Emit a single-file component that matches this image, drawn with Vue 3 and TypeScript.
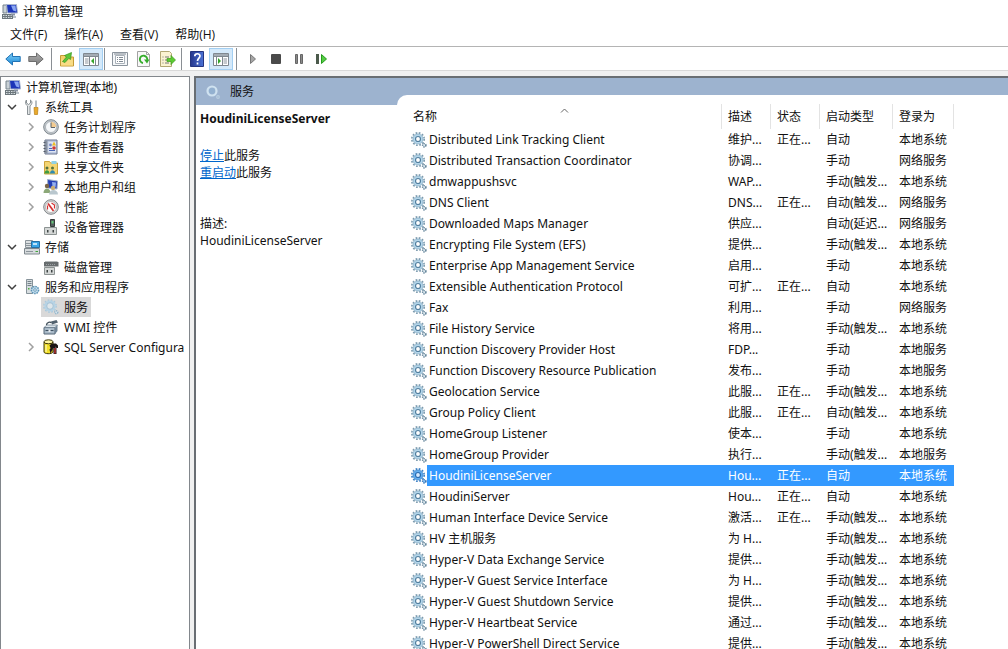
<script setup lang="ts">
import { ref } from 'vue'

interface TreeNode {
  label: string
  icon: string
  closed?: boolean
  children?: TreeNode[]
}

interface Service {
  name: string
  desc: string
  status: string
  startup: string
  logon: string
}

interface Tool {
  icon: string
  label: string
  pressed?: boolean
}

const menus = ['文件(F)', '操作(A)', '查看(V)', '帮助(H)']

const toolGroups: { kind: string; tools: Tool[] }[] = [
  {
    kind: 'history',
    tools: [
      { icon: 'back', label: '后退' },
      { icon: 'forward', label: '前进' },
    ],
  },
  {
    kind: 'view',
    tools: [
      { icon: 'up', label: '上移一级' },
      { icon: 'tree-pane', label: '显示/隐藏控制台树', pressed: true },
    ],
  },
  {
    kind: 'item',
    tools: [
      { icon: 'props', label: '属性' },
      { icon: 'refresh', label: '刷新' },
      { icon: 'export', label: '导出列表' },
    ],
  },
  {
    kind: 'help',
    tools: [
      { icon: 'help', label: '帮助' },
      { icon: 'action-pane', label: '显示/隐藏操作窗格', pressed: true },
    ],
  },
  {
    kind: 'media',
    tools: [
      { icon: 'play', label: '启动服务' },
      { icon: 'stop', label: '停止服务' },
      { icon: 'pause', label: '暂停服务' },
      { icon: 'restart', label: '重启动服务' },
    ],
  },
]

const tree: TreeNode[] = [
  {
    label: '系统工具',
    icon: 'tools',
    children: [
      { label: '任务计划程序', icon: 'clock', closed: true },
      { label: '事件查看器', icon: 'events', closed: true },
      { label: '共享文件夹', icon: 'shared', closed: true },
      { label: '本地用户和组', icon: 'users', closed: true },
      { label: '性能', icon: 'perf', closed: true },
      { label: '设备管理器', icon: 'device' },
    ],
  },
  {
    label: '存储',
    icon: 'storage',
    children: [{ label: '磁盘管理', icon: 'disk' }],
  },
  {
    label: '服务和应用程序',
    icon: 'server',
    children: [
      { label: '服务', icon: 'gear-soft' },
      { label: 'WMI 控件', icon: 'wmi' },
      { label: 'SQL Server Configura', icon: 'sql', closed: true },
    ],
  },
]
const currentNode = ref('服务')

const columns = [
  { label: '名称', cls: 'c-name' },
  { label: '描述', cls: 'c-desc' },
  { label: '状态', cls: 'c-status' },
  { label: '启动类型', cls: 'c-startup' },
  { label: '登录为', cls: 'c-logon' },
]

const RUN = '正在...'
const AUTO = '自动'
const MANUAL = '手动'
const MANUAL_T = '手动(触发...'
const AUTO_T = '自动(触发...'
const AUTO_D = '自动(延迟...'
const SYS = '本地系统'
const NET = '网络服务'
const LOCAL = '本地服务'

const rows: [string, string, string, string, string][] = [
  ['Distributed Link Tracking Client', '维护...', RUN, AUTO, SYS],
  ['Distributed Transaction Coordinator', '协调...', '', MANUAL, NET],
  ['dmwappushsvc', 'WAP...', '', MANUAL_T, SYS],
  ['DNS Client', 'DNS...', RUN, AUTO_T, NET],
  ['Downloaded Maps Manager', '供应...', '', AUTO_D, NET],
  ['Encrypting File System (EFS)', '提供...', '', MANUAL_T, SYS],
  ['Enterprise App Management Service', '启用...', '', MANUAL, SYS],
  ['Extensible Authentication Protocol', '可扩...', RUN, AUTO, SYS],
  ['Fax', '利用...', '', MANUAL, NET],
  ['File History Service', '将用...', '', MANUAL_T, SYS],
  ['Function Discovery Provider Host', 'FDP...', '', MANUAL, LOCAL],
  ['Function Discovery Resource Publication', '发布...', '', MANUAL, LOCAL],
  ['Geolocation Service', '此服...', RUN, MANUAL_T, SYS],
  ['Group Policy Client', '此服...', RUN, AUTO_T, SYS],
  ['HomeGroup Listener', '使本...', '', MANUAL, SYS],
  ['HomeGroup Provider', '执行...', '', MANUAL_T, LOCAL],
  ['HoudiniLicenseServer', 'Hou...', RUN, AUTO, SYS],
  ['HoudiniServer', 'Hou...', RUN, AUTO, SYS],
  ['Human Interface Device Service', '激活...', RUN, MANUAL_T, SYS],
  ['HV 主机服务', '为 H...', '', MANUAL_T, SYS],
  ['Hyper-V Data Exchange Service', '提供...', '', MANUAL_T, SYS],
  ['Hyper-V Guest Service Interface', '为 H...', '', MANUAL_T, SYS],
  ['Hyper-V Guest Shutdown Service', '提供...', '', MANUAL_T, SYS],
  ['Hyper-V Heartbeat Service', '通过...', '', MANUAL_T, SYS],
  ['Hyper-V PowerShell Direct Service', '提供...', '', MANUAL_T, SYS],
]
const services: Service[] = rows.map(([name, desc, status, startup, logon]) => ({
  name,
  desc,
  status,
  startup,
  logon,
}))
const selected = ref('HoudiniLicenseServer')
</script>

<template>
  <div class="window">
    <svg class="defs" width="0" height="0" aria-hidden="true">
      <linearGradient id="gBlue" x1="0" y1="0" x2="0" y2="1">
        <stop offset="0" stop-color="#7fd0f8" />
        <stop offset="1" stop-color="#1b87d6" />
      </linearGradient>
      <linearGradient id="gGray" x1="0" y1="0" x2="0" y2="1">
        <stop offset="0" stop-color="#b0b0b0" />
        <stop offset="1" stop-color="#7c7c7c" />
      </linearGradient>
      <linearGradient id="gHelp" x1="0" y1="0" x2="1" y2="0">
        <stop offset="0" stop-color="#27378c" />
        <stop offset="1" stop-color="#4a72d6" />
      </linearGradient>
      <symbol id="i-computer" viewBox="0 0 16 16">
        <path d="M1 2h4v8H1z" fill="#c9d1d6" stroke="#77838c" />
        <path d="M4.500 1.500h10l1 8.500h-10z" fill="#1c35b8" stroke="#a9b6cf" />
        <path d="M9 2.500l4.500 0 .6 6-3-1z" fill="#8aa6f2" />
        <path d="M0 11h11v5H0z" fill="#6d777c" />
        <path d="M1 12.500h9M1 14.500h9" stroke="#d5dcdf" stroke-dasharray="1.500 1" />
        <path d="M9 10.500h4v2H9z" fill="#8893a3" />
        <path d="M11 13h3v2h-3z" fill="#b9c2ca" />
      </symbol>
      <symbol id="i-back" viewBox="0 0 16 16">
        <path d="M.8 8 7.500 2v3.500h7.700v5H7.500V14z" fill="url(#gBlue)" stroke="#2273b4" stroke-linejoin="round" />
      </symbol>
      <symbol id="i-forward" viewBox="0 0 16 16">
        <path d="M15.200 8 8.500 2v3.500H.8v5h7.700V14z" fill="url(#gGray)" stroke="#6d6d6d" stroke-linejoin="round" />
      </symbol>
      <symbol id="i-up" viewBox="0 0 16 16">
        <path d="M1.500 4.500h5l1 1.500h7v9h-13z" fill="#f4cf69" stroke="#c59b36" />
        <path d="M2 8.500h12v6H2z" fill="#f8dc86" />
        <path d="M3.500 10.500 7.500 6 5.500 4.500 12.500 1.500 11.500 8.500 9.800 7.300 6 11.500z" fill="#5cc63a" stroke="#389420" stroke-width=".7" />
      </symbol>
      <symbol id="i-tree-pane" viewBox="0 0 16 16">
        <path d="M.5 2.500h15v12H.5z" fill="#fff" stroke="#808890" />
        <path d="M1 3h14v2.500H1z" fill="#a4acb4" />
        <path d="M1 5.500h14M6.500 6v8M12.500 6v8" stroke="#808890" />
        <path d="M2 8h3.500M2 10h3.500M2 12h3.500" stroke="#8c949c" />
        <path d="M11 7v6L8 10z" fill="#35a52a" />
      </symbol>
      <symbol id="i-action-pane" viewBox="0 0 16 16">
        <path d="M.5 2.500h15v12H.5z" fill="#fff" stroke="#808890" />
        <path d="M1 3h14v2.500H1z" fill="#a4acb4" />
        <path d="M1 5.500h14M3.500 6v8M9.500 6v8" stroke="#808890" />
        <path d="M10.500 8H14M10.500 10H14M10.500 12H14" stroke="#8c949c" />
        <path d="M5 7v6l3-3z" fill="#35a52a" />
      </symbol>
      <symbol id="i-props" viewBox="0 0 16 16">
        <path d="M.5 1.500h15v13H.5z" fill="#f5f7f9" stroke="#8b949d" />
        <path d="M3.500 4.500h9v8h-9z" fill="#fff" stroke="#a9b1b9" />
        <path d="M2 3h12M5 6.500h1M7 6.500h4M5 8.500h1M7 8.500h4M5 10.500h1M7 10.500h4" stroke="#7e8892" />
      </symbol>
      <symbol id="i-refresh" viewBox="0 0 16 16">
        <path d="M1.500.500h9l3 3v12h-12z" fill="#f8f8f8" stroke="#a2a2a2" />
        <path d="M10.500.500v3h3" fill="none" stroke="#a2a2a2" />
        <path d="M7 12A3.700 3.700 0 1 1 11.200 9" fill="none" stroke="#35ac2b" stroke-width="1.900" />
        <path d="M8 8.500h5.500l-2.500 4z" fill="#35ac2b" />
      </symbol>
      <symbol id="i-export" viewBox="0 0 16 16">
        <path d="M.5.500h9l2 2v13H.5z" fill="#fbf3d2" stroke="#b3a875" />
        <path d="M2.500 6h1M5 6h4M2.500 9h1M5 9h2M2.500 12h1M5 12h4" stroke="#777" />
        <path d="M7 7.500h4V4.500L15.500 9 11 13.500v-3H7z" fill="#5ccb32" stroke="#3c9a1e" stroke-width=".7" />
      </symbol>
      <symbol id="i-help" viewBox="0 0 16 16">
        <path d="M1.500.500h13v15h-13z" fill="url(#gHelp)" stroke="#25357f" />
        <path d="M5.800 5.200C5.800 2 11 2 11 5c0 2-2.500 2.200-2.500 5M8.500 11.500v2" fill="none" stroke="#fff" stroke-width="1.700" />
      </symbol>
      <symbol id="i-play" viewBox="0 0 16 16">
        <path d="M5.500 3.500v9L10.500 8z" fill="#a5a5a5" stroke="#777" />
      </symbol>
      <symbol id="i-stop" viewBox="0 0 16 16">
        <rect x="3" y="3" width="10" height="10" rx="1" fill="#4a4a4a" />
      </symbol>
      <symbol id="i-pause" viewBox="0 0 16 16">
        <path d="M4.500 3.500h2v9h-2zM9.500 3.500h2v9h-2z" fill="#8a8a8a" stroke="#666" />
      </symbol>
      <symbol id="i-restart" viewBox="0 0 16 16">
        <path d="M2 3h3v10H2z" fill="#4c5a4c" />
        <path d="M7.500 3.500v9L12.500 8z" fill="#55cb44" stroke="#249c1b" />
      </symbol>
      <symbol id="i-tools" viewBox="0 0 16 16">
        <path d="M2.500 1v3l2 1.500 2-1.500V1c2 1.500 2 4-.5 6v8.500H3.500V7C1 5 1 2.500 2.500 1z" fill="#e4e7e8" stroke="#7f878b" stroke-width=".9" />
        <path d="M11 1.500h2V8h-2z" fill="#b7bec3" />
        <path d="M10 8.500h4l-.5 7h-3z" fill="#e9a92c" stroke="#b87f16" stroke-width=".7" />
      </symbol>
      <symbol id="i-clock" viewBox="0 0 16 16">
        <circle cx="8" cy="8" r="7.300" fill="#c6cbcf" stroke="#7d868d" />
        <circle cx="8" cy="8" r="5.500" fill="#f6f8fa" stroke="#99a2a9" stroke-width=".7" />
        <path d="M8 8V2.700A5.300 5.300 0 0 1 13.300 8z" fill="#f3cb91" />
        <path d="M8 3.500V8.500h4" fill="none" stroke="#5b6268" />
      </symbol>
      <symbol id="i-events" viewBox="0 0 16 16">
        <path d="M2 1h12v14H2z" fill="#bfcbe3" stroke="#6c7690" />
        <path d="M1.500 1.500h3v13h-3z" fill="#87909f" />
        <path d="M.5 3.500h2M.5 6.500h2M.5 9.500h2M.5 12.500h2" stroke="#555d6a" />
        <path d="M5.500 3h7.500v10H5.500z" fill="#dfe5f2" />
        <path d="M11 2.500 13 6.500H9z" fill="#eebd23" />
        <circle cx="7.500" cy="6" r="1.400" fill="#7387c9" />
        <circle cx="11" cy="9" r="1.800" fill="#d33a35" />
        <path d="M6 9.500h3M6 11.500h6" stroke="#4965b5" />
      </symbol>
      <symbol id="i-shared" viewBox="0 0 16 16">
        <path d="M1.500 2.500h5l1 1.500h7v11h-13z" fill="#f4d573" stroke="#cda33c" />
        <path d="M8.500 2h5v3h-5z" fill="#8fd0e6" />
        <circle cx="4" cy="9" r="1.500" fill="#54713d" />
        <circle cx="9.500" cy="9" r="1.500" fill="#54713d" />
        <path d="M1.500 14.500c0-4.500 5-4.500 5 0z" fill="#3f9c43" />
        <path d="M7 14.500c0-4.500 5-4.500 5 0z" fill="#2f8bb0" />
      </symbol>
      <symbol id="i-users" viewBox="0 0 16 16">
        <path d="M4.500.500 14.500 2l-.5 8L5 9z" fill="#243fb5" stroke="#a1b1cb" />
        <path d="M9 3l4 .5-.5 5-3-1z" fill="#94b0f0" />
        <circle cx="4" cy="7" r="2.200" fill="#7a6547" />
        <path d="M.5 14c0-6 7-6 7 0z" fill="#8ca878" />
        <circle cx="10" cy="9" r="2.200" fill="#c9ae74" />
        <path d="M6 15.500c0-6 9-6 9 0z" fill="#b9c7ce" />
      </symbol>
      <symbol id="i-perf" viewBox="0 0 16 16">
        <circle cx="8" cy="8" r="7.300" fill="#d8d8d8" stroke="#80868a" />
        <circle cx="8" cy="8" r="5.500" fill="#fff" stroke="#a5a5a5" stroke-width=".7" />
        <path d="M5 4.500 10.500 12" stroke="#d43131" stroke-width="1.700" />
        <path d="M4.500 6.500v4M8.500 4l3 2v3.500" fill="none" stroke="#d43131" stroke-width="1.200" />
      </symbol>
      <symbol id="i-device" viewBox="0 0 16 16">
        <path d="M7.500.500h4v7h-4z" fill="#57605f" stroke="#343c3b" />
        <path d="M8.500 2h2v2.500h-2z" fill="#65c77b" />
        <path d="M1.500 8.500h12v7h-12z" fill="#d4d7d6" stroke="#8c9392" />
        <path d="M4 11h1.500v2.500H4zM9.500 11H11v2.500H9.500z" fill="#3e4544" />
      </symbol>
      <symbol id="i-storage" viewBox="0 0 16 16">
        <path d="M1.500 1.500h7v7h-7z" fill="#dce0e2" stroke="#8c959b" />
        <path d="M2 4.500h6M2 6.500h6" stroke="#8c959b" />
        <path d="M.5 9.500h15v5.500H.5z" fill="#d7dbdd" stroke="#7f888e" />
        <path d="M7.500 2.500h8v6h-8z" fill="#39a4e6" stroke="#266fa3" />
        <path d="M9 4h4v2H9z" fill="#bfe4f9" />
        <path d="M2 12.500h7" stroke="#8c959b" />
        <path d="M11.500 12.500h2.500" stroke="#3fa63a" />
      </symbol>
      <symbol id="i-disk" viewBox="0 0 16 16">
        <path d="M1 3h14.500v4.500H1z" fill="#676c6e" />
        <path d="M2 2.500h12.500" stroke="#b6babb" />
        <path d="M3 5.500h9" stroke="#9ba0a2" stroke-dasharray="1 1" />
        <path d="M1.500 8.500h10v7h-10z" fill="#d4d7d6" stroke="#8c9392" />
        <path d="M3.500 11H5v2.500H3.500zM8 11h1.500v2.500H8z" fill="#3e4544" />
      </symbol>
      <symbol id="i-server" viewBox="0 0 16 16">
        <path d="M2.500.500h6v14h-6z" fill="#d7dde0" stroke="#87939a" />
        <path d="M3.500 2.500h4M3.500 4.500h4M3.500 6.500h4" stroke="#75838b" />
        <path d="M4 9h1.500v1.500H4z" fill="#4eae3f" />
        <circle cx="11" cy="11" r="3.600" fill="#c2deee" stroke="#5d93b5" stroke-width="1.500" stroke-dasharray="1.600 .8" />
        <circle cx="11" cy="11" r="1.300" fill="#fff" stroke="#6d9dbb" />
      </symbol>
      <symbol id="i-gear" viewBox="0 0 16 16">
        <circle cx="7" cy="7" r="6.200" fill="none" stroke="#7b9aae" stroke-width="1.600" stroke-dasharray="1.750 1.500" />
        <circle cx="7" cy="7" r="5" fill="#b4d6ea" stroke="#86adc6" stroke-width=".8" />
        <circle cx="7" cy="7" r="2.500" fill="#fff" stroke="#527f9f" stroke-width="1.200" />
        <circle cx="13.300" cy="13.300" r="1.600" fill="#e3edf3" stroke="#64859a" stroke-width="1.600" stroke-dasharray="1.200 .8" />
      </symbol>
      <symbol id="i-gear-selected" viewBox="0 0 16 16">
        <circle cx="7" cy="7" r="6.200" fill="none" stroke="#3b7fc4" stroke-width="1.600" stroke-dasharray="1.750 1.500" />
        <circle cx="7" cy="7" r="5" fill="#62aef0" stroke="#3f86cc" stroke-width=".8" />
        <circle cx="7" cy="7" r="2.500" fill="#d8ebff" stroke="#2a6bb0" stroke-width="1.200" />
        <circle cx="13.300" cy="13.300" r="1.600" fill="#8fc4f7" stroke="#3675b5" stroke-width="1.600" stroke-dasharray="1.200 .8" />
      </symbol>
      <symbol id="i-gear-soft" viewBox="0 0 16 16">
        <circle cx="7" cy="7" r="6.200" fill="none" stroke="#a9c9dd" stroke-width="1.400" stroke-dasharray="1.750 1.500" />
        <circle cx="7" cy="7" r="4.600" fill="none" stroke="#b5d3e6" stroke-width="2" />
        <circle cx="7" cy="7" r="3.300" fill="#dfe6ea" stroke="#93b9d1" stroke-width=".8" />
        <circle cx="13.300" cy="13.300" r="1.500" fill="#dbe8ef" stroke="#93b5cb" stroke-width="1.400" stroke-dasharray="1.200 .8" />
      </symbol>
      <symbol id="i-gear-head" viewBox="0 0 16 16">
        <circle cx="7" cy="7" r="4.500" fill="none" stroke="#cfe2f0" stroke-width="2.200" />
        <circle cx="7" cy="7" r="3" fill="#93b1d0" />
        <circle cx="13" cy="13" r="1.300" fill="none" stroke="#b9cee0" stroke-width="1.200" />
      </symbol>
      <symbol id="i-wmi" viewBox="0 0 16 16">
        <path d="M1 8.500h11V15H1z" fill="#a9bac8" stroke="#566878" />
        <path d="M1 8.500 4 6h10.500l-2.500 2.500z" fill="#dbe4ea" stroke="#66788a" stroke-width=".7" />
        <path d="M12 8.500 14.500 6v6L12 15z" fill="#6f8496" />
        <path d="M3.500 6c0-3 4-3.500 5-2" fill="none" stroke="#3f4d58" stroke-width="1.300" />
        <path d="M8 2.500 13.500 1l1.500 2.500-6 2z" fill="#52626f" />
        <path d="M2.500 11.500h8" stroke="#3f5263" />
        <path d="M5.500 10.500h2v2.500h-2z" fill="#e8edf1" />
      </symbol>
      <symbol id="i-sql" viewBox="0 0 16 16">
        <path d="M1 3v10c0 2 8 2.500 9 0V3z" fill="#f2e028" stroke="#3c3608" />
        <ellipse cx="5.500" cy="2.800" rx="4.500" ry="2" fill="#fff6a0" stroke="#3c3608" />
        <path d="M3 6v7" stroke="#fffbd6" />
        <path d="M6.500 6.500 8.500 4.500H13L15 6.500V9h-1.500l-1-1.500V9H7.500z" fill="#1d1616" />
        <path d="M9 7.500 6.500 10.500l1 4 2.500-5z" fill="#1d1616" />
        <path d="M12 8.500V15" stroke="#1d1616" stroke-width="3" />
        <path d="M12 9v5.500" stroke="#d83a3a" stroke-width="1.300" />
      </symbol>
    </svg>

    <header class="titlebar">
      <svg class="icon"><use href="#i-computer" /></svg>
      <span>计算机管理</span>
    </header>

    <nav class="menubar">
      <button v-for="m in menus" :key="m" type="button">{{ m }}</button>
    </nav>

    <div class="toolbar" role="toolbar">
      <div v-for="g in toolGroups" :key="g.kind" class="group" :class="g.kind">
        <button
          v-for="t in g.tools"
          :key="t.icon"
          type="button"
          :class="{ pressed: t.pressed }"
          :aria-label="t.label"
        >
          <svg class="icon"><use :href="'#i-' + t.icon" /></svg>
        </button>
      </div>
    </div>

    <main class="body">
      <aside class="tree">
        <div class="node root">
          <button type="button" class="label">
            <svg class="icon"><use href="#i-computer" /></svg>
            <span>计算机管理(本地)</span>
          </button>
        </div>
        <ul>
          <li v-for="n in tree" :key="n.label">
            <div class="node">
              <button type="button" class="expander open" :aria-label="'折叠 ' + n.label">
                <svg viewBox="0 0 10 10"><path d="M1 3l4 4 4-4" /></svg>
              </button>
              <button type="button" class="label">
                <svg class="icon"><use :href="'#i-' + n.icon" /></svg>
                <span>{{ n.label }}</span>
              </button>
            </div>
            <ul>
              <li v-for="c in n.children" :key="c.label" class="node">
                <button v-if="c.closed" type="button" class="expander" :aria-label="'展开 ' + c.label">
                  <svg viewBox="0 0 10 10"><path d="M3 1l4 4-4 4" /></svg>
                </button>
                <span v-else class="expander"></span>
                <button
                  type="button"
                  class="label"
                  :class="{ current: c.label === currentNode }"
                  @click="currentNode = c.label"
                >
                  <svg class="icon"><use :href="'#i-' + c.icon" /></svg>
                  <span>{{ c.label }}</span>
                </button>
              </li>
            </ul>
          </li>
        </ul>
      </aside>

      <section class="content">
        <div class="side">
          <div class="banner">
            <svg class="icon"><use href="#i-gear-head" /></svg>
            <span>服务</span>
          </div>
          <div class="detail">
            <h2>{{ selected }}</h2>
            <p class="actions">
              <a href="#stop">停止</a>此服务<br />
              <a href="#restart">重启动</a>此服务
            </p>
            <p>描述:<br />{{ selected }}</p>
          </div>
        </div>
        <div class="list">
          <table>
            <colgroup>
              <col v-for="c in columns" :key="c.cls" :class="c.cls" />
            </colgroup>
            <thead>
              <tr>
                <th v-for="(c, i) in columns" :key="c.cls" scope="col">
                  <div class="head">
                    {{ c.label }}
                    <svg v-if="i === 0" class="sort" viewBox="0 0 9 5"><path d="M1 4.500 4.500 1 8 4.500" /></svg>
                  </div>
                </th>
              </tr>
            </thead>
            <tbody>
              <tr
                v-for="s in services"
                :key="s.name"
                :class="{ selected: s.name === selected }"
                @click="selected = s.name"
              >
                <td class="name">
                  <div class="name-cell">
                    <svg class="icon">
                      <use :href="s.name === selected ? '#i-gear-selected' : '#i-gear'" />
                    </svg>
                    <span>{{ s.name }}</span>
                  </div>
                </td>
                <td>{{ s.desc }}</td>
                <td>{{ s.status }}</td>
                <td>{{ s.startup }}</td>
                <td>{{ s.logon }}</td>
              </tr>
            </tbody>
          </table>
        </div>
      </section>
    </main>
  </div>
</template>

<style>
body {
  margin: 0;
  overflow: hidden;
}
</style>

<style scoped>
.window {
  display: flex;
  flex-direction: column;
  height: 100vh;
  background: #fff;
  color: #111;
  font: 12px/17px 'Noto Sans', 'Noto Sans CJK SC', sans-serif;
}

.defs {
  position: absolute;
}

button {
  margin: 0;
  padding: 0;
  border: 0;
  background: none;
  color: inherit;
  font: inherit;
}

.icon {
  flex: none;
  display: block;
  width: 16px;
  height: 16px;
}

.titlebar {
  display: flex;
  align-items: center;
  gap: 5px;
  height: 22px;
  padding-left: 2px;
}

.menubar {
  display: flex;
  gap: 17px;
  height: 24px;
  padding-left: 10px;
  border-bottom: 1px solid #b4b4b4;
  font-family: 'Open Sans', 'Noto Sans CJK SC', sans-serif;
}

.toolbar {
  display: flex;
  align-items: center;
  height: 22px;
  padding-top: 1px;
  border-bottom: 1px solid #d9d9d9;
}

.group {
  display: flex;
  height: 22px;
  padding: 0 1px;
}

.group + .group {
  padding-left: 3px;
  border-left: 1px solid #8a8f94;
}

.group button {
  display: grid;
  place-items: center;
  width: 24px;
  height: 22px;
}

.group.history {
  padding-right: 4px;
}

.group.help {
  padding-right: 3px;
}

.group.media {
  padding-left: 4px;
}

.group.history button,
.group.media button {
  width: 23px;
}

.group button.pressed {
  background: #d4e9fa;
  box-shadow: inset 0 0 0 1px #a3cff2;
}

.body {
  display: flex;
  flex: 1;
  min-height: 0;
  padding-top: 5px;
  background: #f0f0f0;
}

.tree {
  flex: 0 0 188px;
  overflow: hidden;
  border: 1px solid #82878c;
  border-bottom: 0;
  background: #fff;
}

.tree ul {
  margin: 0;
  padding: 0;
  list-style: none;
}

.tree ul ul {
  padding-left: 19px;
}

.node {
  display: flex;
  height: 20px;
  padding-left: 4px;
}

.node.root {
  padding-left: 2px;
}

.expander {
  flex: none;
  display: grid;
  place-items: center start;
  width: 17px;
  padding-left: 2px;
  box-sizing: border-box;
}

.expander svg {
  width: 10px;
  height: 10px;
  fill: none;
  stroke: #a0a0a0;
  stroke-width: 1.5;
}

.expander.open svg {
  stroke: #404040;
}

.label {
  display: flex;
  align-items: center;
  gap: 5px;
  padding: 0 3px 0 2px;
  white-space: nowrap;
}

.label.current {
  background: #d9d9d9;
}

.content {
  display: flex;
  flex: 1;
  min-width: 0;
  margin-left: 4px;
  border: 1px solid #696e73;
  border-width: 2px 0 0 2px;
  background: #9db3cf;
}

.side {
  display: flex;
  flex: 0 0 201px;
  flex-direction: column;
  background: linear-gradient(#9db3cf 27px, #fff 27px);
}

.banner {
  display: flex;
  align-items: center;
  gap: 9px;
  height: 27px;
  padding-left: 9px;
}

.detail {
  padding: 5px 0 0 4px;
}

.detail h2 {
  margin: 0 0 20px;
  font-size: 12px;
  line-height: 17px;
}

.detail p {
  margin: 0;
}

.detail .actions {
  margin-bottom: 34px;
}

.detail a {
  color: #0066cc;
}

.list {
  flex: 1;
  overflow: hidden;
  margin-top: 17px;
  padding: 9px 0 0 8px;
  border-top-left-radius: 10px;
  background: #fff;
}

table {
  table-layout: fixed;
  width: 549px;
  border-collapse: separate;
  border-spacing: 0;
}

.c-name {
  width: 317px;
}

.c-desc,
.c-status {
  width: 49px;
}

.c-startup {
  width: 73px;
}

.c-logon {
  width: 61px;
}

th,
td {
  padding: 0 0 0 6px;
  text-align: left;
  white-space: nowrap;
  font-weight: normal;
}

th {
  height: 25px;
  border-right: 1px solid #e3e3e3;
}

th:first-child {
  padding-left: 8px;
}

.head {
  display: flex;
}

.sort {
  width: 9px;
  height: 5px;
  margin-left: 123px;
  fill: none;
  stroke: #666;
}

tbody tr {
  height: 21px;
}

.name-cell {
  display: flex;
  align-items: center;
  height: 21px;
}

.name-cell span {
  flex: 1;
  padding-left: 2px;
  line-height: 21px;
}

.selected td:not(.name),
.selected .name-cell span {
  background: #3399ff;
  color: #fff;
}
</style>
